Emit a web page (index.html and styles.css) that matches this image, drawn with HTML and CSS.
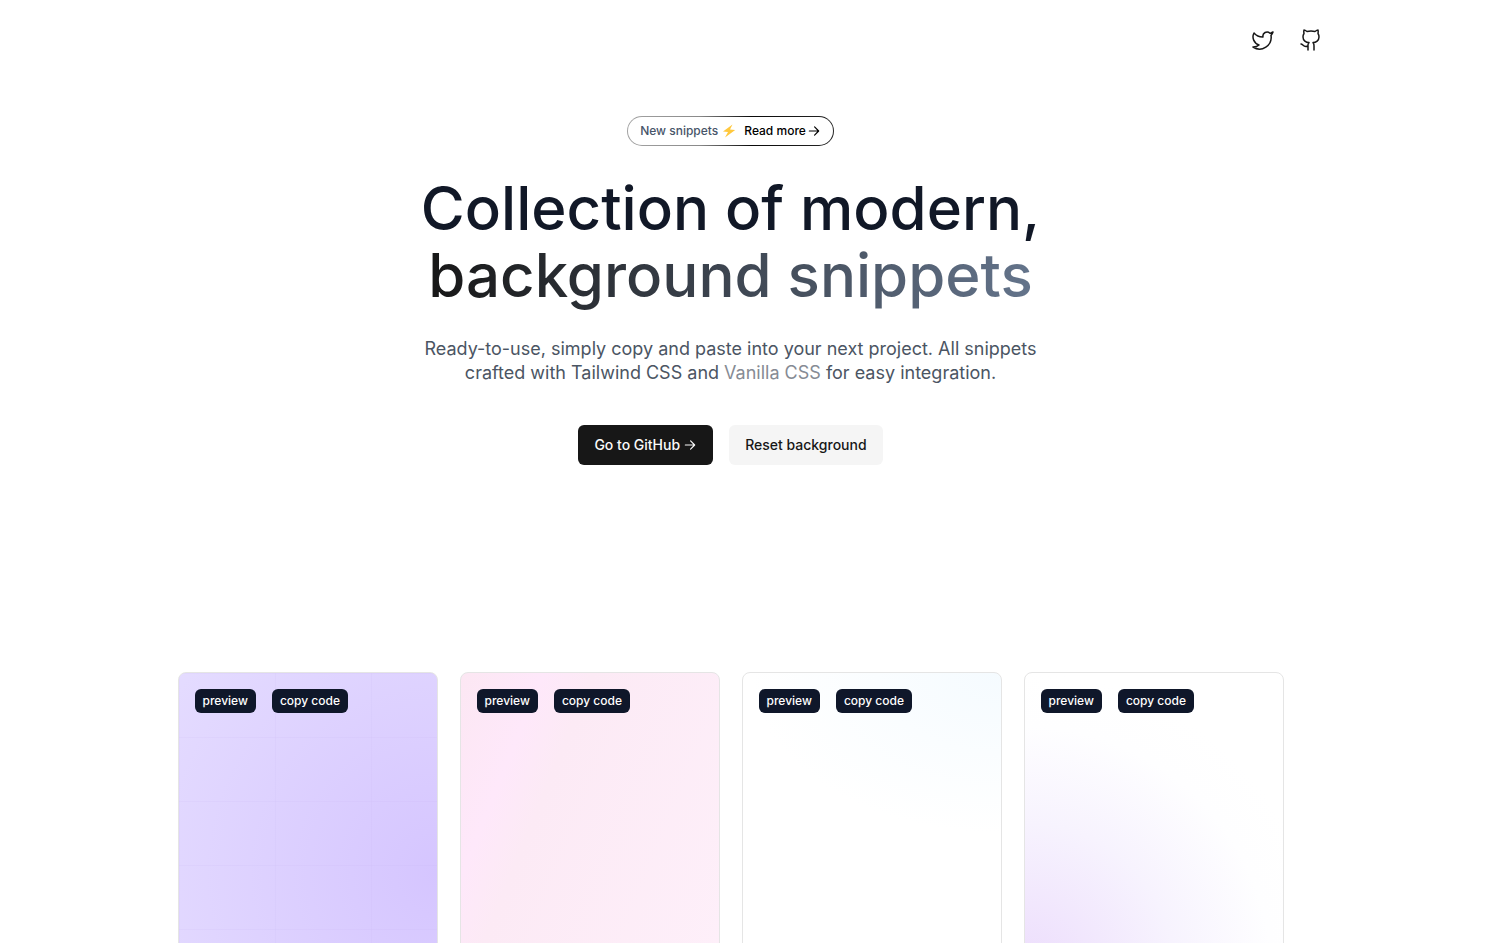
FILE: index.html
```html
<!DOCTYPE html>
<html lang="en">
<head>
<meta charset="utf-8">
<meta name="viewport" content="width=device-width, initial-scale=1">
<title>Background snippets</title>
<link rel="stylesheet" href="styles.css">
</head>
<body>
<header class="site-header">
  <nav class="social" aria-label="Social">
    <a href="#" aria-label="Twitter"><svg class="icon" viewBox="0 0 24 24"><path d="M22 4s-.7 2.1-2 3.4c1.6 10-9.4 17.3-18 11.6 2.2.1 4.4-.6 6-2C3 15.5.5 9.6 3 5c2.2 2.6 5.6 4.1 9 4-.9-4.2 4-6.6 7-3.8 1.1 0 3-1.2 3-1.2z"/></svg></a>
    <a href="#" aria-label="GitHub"><svg class="icon" viewBox="0 0 24 24"><path d="M15 22v-4a4.8 4.8 0 0 0-1-3.5c3 0 6-2 6-5.5.08-1.25-.27-2.48-1-3.5.28-1.15.28-2.35 0-3.5 0 0-1 0-3 1.5-2.64-.5-5.36-.5-8 0C6 2 5 2 5 2c-.3 1.15-.3 2.35 0 3.5A5.4 5.4 0 0 0 4 9c0 3.5 3 5.5 6 5.5-.39.49-.68 1.05-.85 1.65-.17.6-.22 1.23-.15 1.85v4M9 18c-4.51 2-5-2-7-2"/></svg></a>
  </nav>
</header>
<main>
  <section class="hero">
    <a class="pill" href="#">
      <span class="pill-label">New snippets
        <svg class="bolt" viewBox="0 0 14 14" aria-hidden="true"><path d="M10.5.5 1 7.6l5 .3L3 13.5 13.2 6 8 5.600z"/></svg></span>
      <span class="pill-more">Read more
        <svg class="arrow" viewBox="0 0 24 24" aria-hidden="true"><path d="M4 12h16M13 5l7 7-7 7"/></svg></span>
    </a>
    <h1 class="title">Collection of modern,<br><span class="title-fade">background snippets</span></h1>
    <p class="lead">Ready-to-use, simply copy and paste into your next project. All snippets crafted with Tailwind CSS and <span class="muted">Vanilla CSS</span> for easy integration.</p>
    <div class="actions">
      <a class="btn btn-dark" href="#">Go to GitHub
        <svg class="arrow" viewBox="0 0 24 24" aria-hidden="true"><path d="M4 12h16M13 5l7 7-7 7"/></svg></a>
      <button class="btn btn-light" type="button">Reset background</button>
    </div>
  </section>
  <section class="cards" aria-label="Snippets">
    <article class="card card-violet"><button class="tag" type="button">preview</button><button class="tag" type="button">copy code</button></article>
    <article class="card card-pink"><button class="tag" type="button">preview</button><button class="tag" type="button">copy code</button></article>
    <article class="card card-sky"><button class="tag" type="button">preview</button><button class="tag" type="button">copy code</button></article>
    <article class="card card-lilac"><button class="tag" type="button">preview</button><button class="tag" type="button">copy code</button></article>
  </section>
</main>
</body>
</html>
```
FILE: styles.css
```css
*, *::before, *::after { box-sizing: border-box; }
body {
  margin: 0;
  padding-right: 25px;
  background: #fff;
  color: #171717;
  font-family: Inter, "Liberation Sans", sans-serif;
}
a { color: inherit; text-decoration: none; }
svg { display: block; fill: none; stroke: currentColor; stroke-linecap: round; stroke-linejoin: round; }
.site-header {
  max-width: 1184px;
  margin: 0 auto;
  padding: 28px 0;
}
.social { display: flex; justify-content: flex-end; gap: 24px; }
.icon { width: 24px; height: 24px; stroke-width: 1.5; }
.hero {
  display: flex;
  flex-direction: column;
  align-items: center;
  padding: 36px 24px 0;
  text-align: center;
}
.pill {
  display: flex;
  align-items: center;
  gap: 8px;
  height: 30px;
  padding: 0 12px;
  border: 1px solid transparent;
  border-radius: 15px;
  background: linear-gradient(#fff, #fff) padding-box, linear-gradient(90deg, #a3a3a3, #8a8a8a 35%, #0a0a0a 60%, #262626) border-box;
  font-size: 12px;
  font-weight: 500;
  line-height: 16px;
}
.pill-label, .pill-more { display: flex; align-items: center; }
.pill-label { gap: 4px; color: #475569; }
.pill-more { gap: 1px; color: #000; }
.bolt { width: 14px; height: 14px; fill: #ffc83d; stroke: none; }
.arrow { width: 14px; height: 14px; stroke-width: 2; }
.title {
  margin: 29px 0 0;
  color: #111827;
  font-size: 60px;
  font-weight: 500;
  line-height: 67px;
}
.title-fade {
  background: linear-gradient(90deg, #171717, #64748b);
  -webkit-background-clip: text;
  background-clip: text;
  color: transparent;
}
.lead {
  max-width: 640px;
  margin: 28px 0 0;
  color: #4b5563;
  font-size: 18px;
  line-height: 24px;
}
.muted { color: #868b94; }
.actions { display: flex; gap: 16px; margin-top: 40px; }
.btn {
  display: flex;
  align-items: center;
  gap: 3px;
  height: 40px;
  padding: 0 16px;
  border: 0;
  border-radius: 6px;
  font: 500 14px/20px Inter, "Liberation Sans", sans-serif;
}
.btn-dark { background: #171717; color: #fafafa; }
.btn-light { background: #f5f5f5; color: #171717; }
.cards {
  display: grid;
  grid-template-columns: repeat(4, 1fr);
  gap: 22px;
  max-width: 1106px;
  margin: 207px auto 0;
}
.card {
  display: flex;
  align-items: flex-start;
  gap: 16px;
  min-height: 384px;
  padding: 16px;
  border: 1px solid #e5e5e5;
  border-radius: 8px;
}
.tag {
  padding: 4px 8px;
  border: 0;
  border-radius: 6px;
  background: #0f172a;
  color: #fff;
  font: 500 12px/16px Inter, "Liberation Sans", sans-serif;
}
.card-violet {
  background:
    linear-gradient(90deg, transparent 95px, rgba(190, 170, 235, .1) 95px) 1px 0 / 96px 64px,
    linear-gradient(transparent 63px, rgba(190, 170, 235, .1) 63px) 0 1px / 96px 64px,
    radial-gradient(circle 360px at 100% 200px, #d5c5ff, #e6deff);
}
.card-pink { background: linear-gradient(112deg, #fce7f3, #fee8fa 20%, #fceaf5 32%, #fef0fa); }
.card-sky { background: radial-gradient(ellipse 250px 160px at 100% 0, #f5fbff, #fff); }
.card-lilac { background: radial-gradient(circle 300px at 0 300px, #ecdcfc, #f7f3fe 50%, #fefeff 82%, #fff); }
```
